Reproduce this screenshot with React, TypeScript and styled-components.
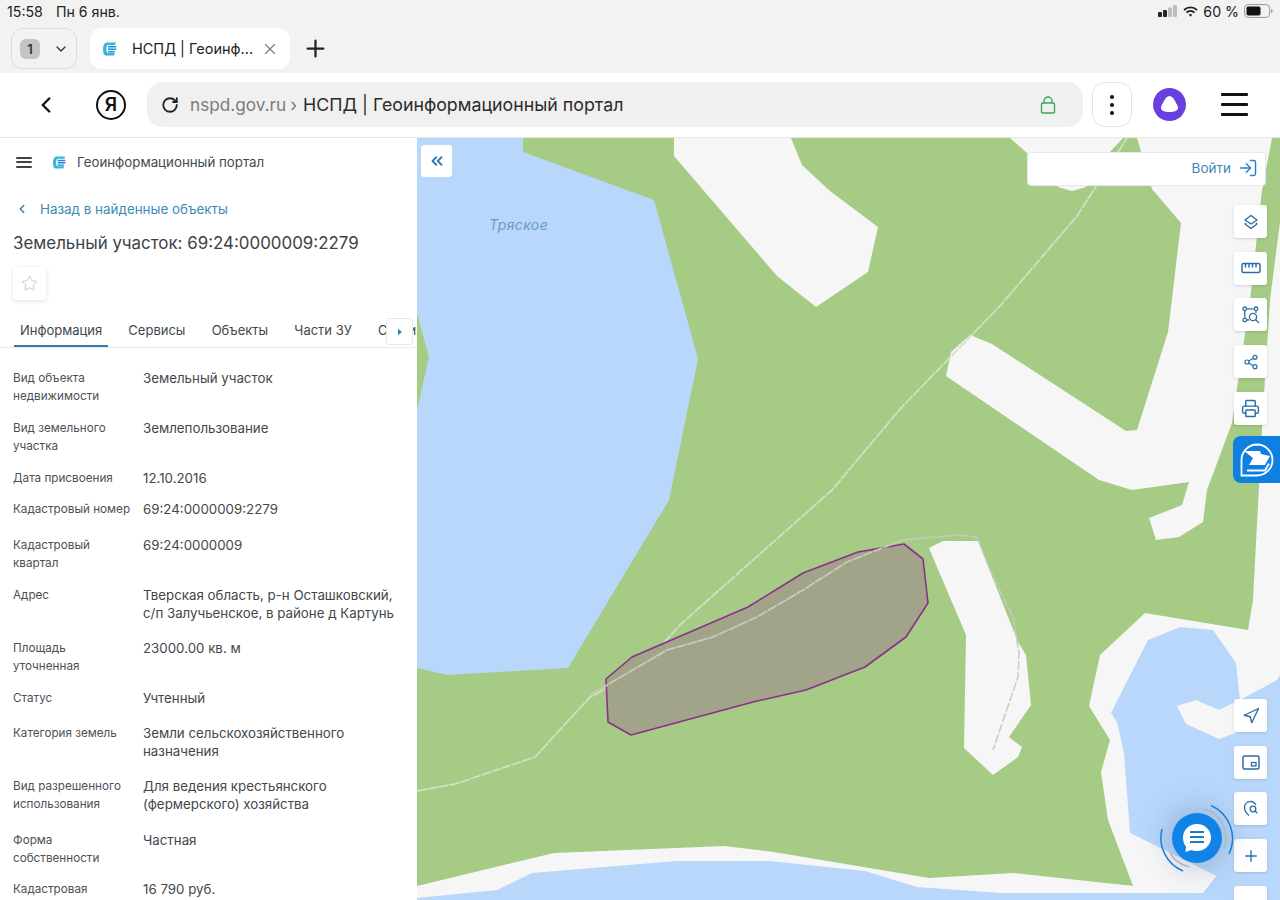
import styled, { createGlobalStyle } from 'styled-components'
import {
  ChevronDown,
  ChevronLeft,
  ChevronsLeft,
  LogIn,
  Navigation,
  Plus,
  Printer,
  RotateCw,
  Share2,
  Star,
  X,
} from 'lucide-react'

const GlobalStyle = createGlobalStyle`
  html, body {
    margin: 0;
    padding: 0;
    background: #fff;
  }
  #root {
    width: 1280px;
    height: 900px;
    overflow: hidden;
    font-family: Inter, 'Noto Sans', sans-serif;
  }
`

const Page = styled.div`
  width: 1280px;
  height: 900px;
  display: flex;
  flex-direction: column;
  overflow: hidden;
`

/* browser chrome */
const Chrome = styled.div`
  height: 73px;
  flex: none;
  background: #f2f2f2;
  display: flex;
  flex-direction: column;
`

const StatusBar = styled.div`
  height: 28px;
  flex: none;
  padding: 0 7px 6px 7px;
  box-sizing: border-box;
  display: flex;
  align-items: center;
  justify-content: space-between;
  font-size: 14.200px;
  color: #222;
`

const StatusGroup = styled.div<{ $gap: number }>`
  display: flex;
  align-items: center;
  gap: ${(p) => p.$gap}px;
`

const TabStrip = styled.div`
  display: flex;
  align-items: center;
  height: 41px;
  padding-left: 11px;
`

const TabCounter = styled.div`
  width: 66px;
  height: 41px;
  box-sizing: border-box;
  border: 1px solid #dcdcdc;
  border-radius: 12px;
  display: flex;
  align-items: center;
  gap: 13px;
  padding-left: 8px;
  margin-right: 13px;
`

const CounterBadge = styled.div`
  width: 20px;
  height: 20px;
  border-radius: 6px;
  background: #c4c4c4;
  display: flex;
  align-items: center;
  justify-content: center;
  font-size: 13px;
  font-weight: 600;
  color: #333;
`

const Tab = styled.div`
  width: 200px;
  height: 41px;
  background: #fff;
  border-radius: 12px;
  display: flex;
  align-items: center;
  padding-left: 12px;
  box-sizing: border-box;
  font-size: 14.500px;
  color: #222;
  margin-right: 12px;
`

const TabTitle = styled.span`
  margin-left: 14px;
  margin-right: 12px;
  width: 117px;
  white-space: nowrap;
`

const AddressRow = styled.div`
  height: 65px;
  flex: none;
  background: #fff;
  border-bottom: 1px solid #e6e6e6;
  box-sizing: border-box;
  display: flex;
  align-items: center;
  padding-left: 33px;
  padding-bottom: 1px;
`

const YandexCircle = styled.div`
  width: 30px;
  height: 30px;
  box-sizing: border-box;
  border: 2.5px solid #111;
  border-radius: 50%;
  margin-left: 37px;
  margin-right: 21px;
  display: flex;
  align-items: center;
  justify-content: center;
  font-size: 19px;
  font-weight: 600;
  color: #111;
`

const AddressField = styled.div`
  width: 936px;
  height: 45px;
  background: #f0f0f0;
  border-radius: 16px;
  display: flex;
  align-items: center;
  padding-left: 14px;
  padding-right: 27px;
  box-sizing: border-box;
  font-size: 17.800px;
  white-space: nowrap;
`

const Domain = styled.span`
  margin-left: 11px;
  font-size: 17.200px;
  color: #7b7b7b;
`

const Crumb = styled.span`
  color: #7b7b7b;
  margin: 0 6px 0 4px;
`

const PageTitle = styled.span`
  flex: 1;
  color: #2b2b2b;
`

const MenuDots = styled.div`
  width: 40px;
  height: 45px;
  box-sizing: border-box;
  border: 1.5px solid #e4e4e4;
  border-radius: 13px;
  margin-left: 9px;
  margin-right: 21px;
  display: flex;
  flex-direction: column;
  align-items: center;
  justify-content: center;
  gap: 4px;
`

const Dot = styled.span`
  width: 4px;
  height: 4px;
  border-radius: 50%;
  background: #111;
`

const Burger = styled.div<{ $w: number; $h: number; $gap: number; $color: string; $after: number }>`
  width: ${(p) => p.$w}px;
  margin-left: 0;
  margin-right: ${(p) => p.$after}px;
  display: flex;
  flex-direction: column;
  gap: ${(p) => p.$gap}px;
  flex: none;
  & > i {
    display: block;
    height: ${(p) => p.$h}px;
    background: ${(p) => p.$color};
    border-radius: 1px;
  }
`

const AliceSlot = styled.div`
  margin-right: 35px;
  flex: none;
  display: flex;
`

/* main area */
const Main = styled.div`
  flex: 1;
  display: flex;
  min-height: 0;
`

const Panel = styled.aside`
  width: 417px;
  flex: none;
  background: #fff;
  overflow: hidden;
  color: #3a3f44;
`

const PanelHeader = styled.div`
  height: 48px;
  display: flex;
  align-items: center;
  padding-left: 16px;
  font-size: 13.300px;
  color: #444a50;
`

const HeaderTitle = styled.span`
  margin-left: 10px;
`

const BackLink = styled.div`
  margin-top: 15px;
  padding-left: 15px;
  display: flex;
  align-items: center;
  gap: 11px;
  font-size: 13.400px;
  color: #3a8bb5;
`

const ObjectTitle = styled.h1`
  margin: 14px 0 0 13px;
  font-size: 16.900px;
  line-height: 24px;
  font-weight: 400;
  color: #3d4247;
  white-space: nowrap;
`

const FavButton = styled.div`
  width: 33px;
  height: 33px;
  margin: 12px 0 0 13px;
  border-radius: 3px;
  box-shadow: 0 1px 4px rgba(60, 70, 90, 0.16);
  display: flex;
  align-items: center;
  justify-content: center;
`

const Tabs = styled.div`
  position: relative;
  margin-top: 16px;
  height: 31px;
  border-bottom: 1px solid #e9edf0;
  display: flex;
  padding-left: 14px;
  overflow: hidden;
  font-size: 13px;
  white-space: nowrap;
`

const TabItem = styled.div<{ $active?: boolean }>`
  height: 31px;
  box-sizing: border-box;
  padding: 0 6px;
  margin-right: 14.200px;
  line-height: 28px;
  color: #41474d;
  border-bottom: 2px solid ${(p) => (p.$active ? '#2e7ea8' : 'transparent')};
`

const TabScroll = styled.div`
  position: absolute;
  left: 386px;
  top: 2px;
  width: 27px;
  height: 27px;
  box-sizing: border-box;
  background: #fff;
  border: 1px solid #e3e9ee;
  border-radius: 3px;
  display: flex;
  align-items: center;
  justify-content: center;
  &::after {
    content: '';
    border-left: 4px solid #2e7ea8;
    border-top: 3px solid transparent;
    border-bottom: 3px solid transparent;
  }
`

const Rows = styled.div`
  margin-top: 21px;
`

const Row = styled.div<{ $after: number }>`
  display: flex;
  padding: 0 13px ${(p) => p.$after}px;
  line-height: 18px;
`

const RowLabel = styled.div`
  width: 130px;
  box-sizing: border-box;
  padding-right: 8px;
  flex: none;
  font-size: 11.700px;
  color: #4b5157;
`

const RowValue = styled.div`
  font-size: 13.300px;
  color: #42474c;
`

/* map */
const MapArea = styled.div`
  position: relative;
  flex: 1;
  overflow: hidden;
  background: #a5cb85;
`

const MapCanvas = styled.svg`
  position: absolute;
  left: 0;
  top: 0;
  display: block;
`

const LakeLabel = styled.span`
  position: absolute;
  left: 72px;
  top: 78px;
  font-size: 14px;
  font-style: italic;
  letter-spacing: 0.4px;
  color: #6b98c4;
`

const Collapse = styled.div`
  position: absolute;
  left: 4px;
  top: 7px;
  width: 31px;
  height: 32px;
  background: #fff;
  border-radius: 3px;
  display: flex;
  align-items: center;
  justify-content: center;
  color: #2f7ab0;
`

const LoginBar = styled.div`
  position: absolute;
  left: 610px;
  top: 14px;
  width: 239px;
  height: 34px;
  box-sizing: border-box;
  background: #fff;
  border: 1px solid #e2eaf2;
  border-radius: 4px;
  display: flex;
  align-items: center;
  justify-content: flex-end;
  gap: 7px;
  padding-right: 7px;
  padding-bottom: 2px;
  font-size: 13.500px;
  color: #4486ba;
`

const ToolColumn = styled.div<{ $top: number }>`
  position: absolute;
  left: 817px;
  top: ${(p) => p.$top}px;
  display: flex;
  flex-direction: column;
  gap: 13.700px;
`

const ToolButton = styled.div`
  width: 33px;
  height: 33px;
  background: #fff;
  border-radius: 3px;
  box-shadow: 0 1px 3px rgba(60, 80, 110, 0.22);
  display: flex;
  align-items: center;
  justify-content: center;
  color: #2b6ea6;
`

const PortalTab = styled.div`
  position: absolute;
  left: 816px;
  top: 298px;
  width: 47px;
  height: 47px;
  background: #0f7fe0;
  border-radius: 8px 0 0 8px;
  display: flex;
  align-items: center;
  padding-left: 7px;
  box-sizing: border-box;
`

const ChatBubble = styled.div`
  position: absolute;
  left: 755px;
  top: 675px;
  width: 50px;
  height: 50px;
  border-radius: 50%;
  background: #1283e6;
  box-shadow: 0 0 26px 8px rgba(60, 90, 130, 0.22);
  display: flex;
  align-items: center;
  justify-content: center;
`

const ChatRings = styled.svg`
  position: absolute;
  left: 741px;
  top: 661px;
`

const GREEN = '#a5cb85'
const BLUE = '#b9d7fa'
const WHITE = '#f6f6f7'

const whites = [
  '674,138 674,156 777,276 816,307 868,272 878,227 830,191 802,165 791,138',
  '1010,138 1035,160 1058,187 1072,191 1086,187 1110,152 1123,138',
  '1137,138 1152,189 1181,223 1168,332 1137,430 1126,431 992,344 970,335 951,352 946,376 1099,480 1132,490 1189,482 1182,505 1149,518 1156,540 1179,537 1203,522 1207,490 1232,423 1250,300 1262,190 1272,138',
  '1280,222 1270,300 1263,410 1253,600 1248,630 1145,613 1100,655 1089,706 1110,740 1101,772 1108,820 1133,886 1013,873 929,878 774,852 724,846 554,853 417,886 417,900 1280,900',
  '929,548 943,541 978,541 1018,642 1026,655 1031,705 1009,737 1022,747 1018,757 993,775 964,748 966,635 937,567',
]

const blues = [
  '417,138 523,138 523,152 654,200 698,359 669,500 568,668 447,675 417,668',
  '1180,627 1213,630 1236,663 1240,700 1277,680 1280,675 1280,900 1203,893 1216,876 1130,833 1124,753 1117,722 1111,713 1148,640',
  '417,898 497,890 532,873 677,861 770,861 865,871 917,887 1000,893 1280,893 1280,900 417,900',
]

const parcel =
  '606,679 632,657 748,607 803,573 858,552 904,544 923,559 928,603 906,637 865,667 806,690 753,702 631,735 608,722'

const trailA =
  '417,791 455,784 535,757 590,697 637,672 681,624 832,490 901,408 1000,306 1077,216 1127,138'
const trailB =
  '590,695 667,650 713,637 757,617 803,590 847,562 890,545 903,540 957,535 977,537'
const trailC = '977,537 993,577 1013,617 1019,653 1018,677 993,750'

const details: { label: string; value: string; after: number }[] = [
  { label: 'Вид объекта недвижимости', value: 'Земельный участок', after: 14 },
  { label: 'Вид земельного участка', value: 'Землепользование', after: 14 },
  { label: 'Дата присвоения', value: '12.10.2016', after: 13 },
  { label: 'Кадастровый номер', value: '69:24:0000009:2279', after: 18 },
  { label: 'Кадастровый квартал', value: '69:24:0000009', after: 14 },
  { label: 'Адрес', value: 'Тверская область, р-н Осташковский, с/п Залучьенское, в районе д Картунь', after: 17 },
  { label: 'Площадь уточненная', value: '23000.00 кв. м', after: 14 },
  { label: 'Статус', value: 'Учтенный', after: 17 },
  { label: 'Категория земель', value: 'Земли сельскохозяйственного назначения', after: 17 },
  { label: 'Вид разрешенного использования', value: 'Для ведения крестьянского (фермерского) хозяйства', after: 18 },
  { label: 'Форма собственности', value: 'Частная', after: 13 },
  { label: 'Кадастровая', value: '16 790 руб.', after: 0 },
]

function PortalLogo({ size }: { size: number }) {
  return (
    <svg width={size} height={size} viewBox="0 0 16 16" fill="none">
      <path d="M5 1.500h9l-1 2.500H6.500C5 4 4.500 5 4.400 8c0 3 .5 4 2 4H13l-1 2.500H4C2 14.500 1 12 1 8c0-4 2-6.500 4-6.500z" fill="#35b6d8" />
      <path d="M6 5h8.500l-.6 1.600H6zM6 7.500h8.500l-.6 1.600H6zM6 10h7l-.6 1.400H6z" fill="#1c86d8" />
    </svg>
  )
}

function SignalIcon() {
  return (
    <svg width="20" height="12" viewBox="0 0 20 12">
      <rect x="0" y="7" width="4" height="5" rx="1" fill="#222" />
      <rect x="5" y="5" width="4" height="7" rx="1" fill="#222" />
      <rect x="10" y="2.500" width="4" height="9.500" rx="1" fill="#bdbdbd" />
      <rect x="15" y="0" width="4" height="12" rx="1" fill="#bdbdbd" />
    </svg>
  )
}

function WifiIcon() {
  return (
    <svg width="15" height="11" viewBox="0 0 15 11" fill="none" stroke="#222" strokeWidth="1.800">
      <path d="M1 4a9.500 9.500 0 0 1 13 0" />
      <path d="M3.500 6.500a6 6 0 0 1 8 0" />
      <path d="M7.500 10.800 5.800 8.800a2.600 2.600 0 0 1 3.400 0z" fill="#222" stroke="none" />
    </svg>
  )
}

function BatteryIcon() {
  return (
    <svg width="29" height="14" viewBox="0 0 29 14">
      <rect x="0.600" y="0.600" width="25" height="12.800" rx="3.500" fill="none" stroke="#999" />
      <rect x="2.500" y="2.500" width="14" height="9" rx="1.800" fill="#111" />
      <path d="M27 5v4c1-.3 1.600-1 1.600-2s-.6-1.700-1.600-2z" fill="#999" />
    </svg>
  )
}

function LockIcon() {
  return (
    <svg width="16" height="18" viewBox="0 0 16 18" fill="none" stroke="#3aa651" strokeWidth="1.300">
      <rect x="1.500" y="7" width="13" height="10" rx="1" />
      <path d="M4 7V5a4 4 0 0 1 8 0v2" />
    </svg>
  )
}

function AliceIcon() {
  return (
    <svg width="33" height="33" viewBox="0 0 33 33">
      <circle cx="16.500" cy="16.500" r="16.500" fill="#6a3fe0" />
      <path d="M16.500 8c2.500 0 4 2.200 5.800 5.400 1.500 2.700 2.700 4.700 2.700 6.400 0 3-3.600 4.200-8.500 4.200S8 22.800 8 19.800c0-1.700 1.200-3.700 2.700-6.400C12.500 10.200 14 8 16.500 8z" fill="#fff" />
    </svg>
  )
}

function LayersIcon() {
  return (
    <svg width="16" height="16" viewBox="0 0 16 16" fill="none" stroke="currentColor" strokeWidth="1.400" strokeLinejoin="round">
      <path d="M8 1.500 14 6 8 10 2 6z" />
      <path d="M3 9 2 10l6 4.500L14 10l-1-1" />
    </svg>
  )
}

function RulerIcon() {
  return (
    <svg width="20" height="12" viewBox="0 0 20 12" fill="none" stroke="currentColor" strokeWidth="1.500">
      <rect x="1" y="1.500" width="18" height="9" rx="1.500" />
      <path d="M4.500 2v3.500M8 2v3.500M11.500 2v3.500M15 2v3.500" />
    </svg>
  )
}

function AreaSearchIcon() {
  return (
    <svg width="18" height="18" viewBox="0 0 18 18" fill="none" stroke="currentColor" strokeWidth="1.300">
      <circle cx="2.800" cy="2.800" r="1.800" />
      <circle cx="14" cy="2.800" r="1.800" />
      <circle cx="2.800" cy="14" r="1.800" />
      <path d="M5 2.800h6.500M2.800 5v6.500M5 14h2" />
      <circle cx="11" cy="11" r="3.600" />
      <path d="m13.700 13.700 3.300 3.300M14 5v2" />
    </svg>
  )
}

function MiniMapIcon() {
  return (
    <svg width="18" height="15" viewBox="0 0 18 15" fill="none" stroke="currentColor" strokeWidth="1.500">
      <rect x="1" y="1" width="16" height="13" rx="1.500" />
      <rect x="9.500" y="7.500" width="4.500" height="3.500" strokeWidth="1.300" />
    </svg>
  )
}

function SpotSearchIcon() {
  return (
    <svg width="16" height="17" viewBox="0 0 16 17" fill="none" stroke="currentColor" strokeWidth="1.300">
      <path d="M7.500 1.500C4 1.500 1.500 4 1.500 7.500c0 3 2 5.800 4.500 8" />
      <path d="M13 5c-1-2-3-3.500-5.500-3.500" />
      <circle cx="10" cy="9" r="2.800" />
      <path d="m12 11 2.300 2.300" />
    </svg>
  )
}

function PortalMark() {
  return (
    <svg width="34" height="34" viewBox="0 0 34 34" fill="none">
      <path d="M17 1.500a15.500 15.500 0 0 1 0 31H1.500V17A15.500 15.500 0 0 1 17 1.500z" stroke="#fff" strokeWidth="1.800" />
      <path d="M4 8h16l1 3 9 2-5 9H9l4-7z" fill="#fff" />
      <path d="M7 27.500h18l4-7" stroke="#fff" strokeWidth="1.800" />
    </svg>
  )
}

function ChatIcon() {
  return (
    <svg width="30" height="30" viewBox="0 0 30 30">
      <path d="M15 1c8 0 14 6 14 13.500S23 28 15 28c-2 0-4-.4-5.500-1L3.500 29 4 23.500C2 21.300 1 18 1 14.500 1 7 7 1 15 1z" fill="#fff" />
      <path d="M8 9h14M8 14h14M8 19h14" stroke="#1b7cc8" strokeWidth="2.200" />
    </svg>
  )
}

function MapShapes() {
  return (
    <MapCanvas width="863" height="762" viewBox="417 138 863 762">
      {whites.map((points) => (
        <polygon key={points} points={points} fill={WHITE} />
      ))}
      {blues.map((points) => (
        <polygon key={points} points={points} fill={BLUE} />
      ))}
      <polygon points="1130,833 1216,876 1203,893 1000,893 1000,874 1133,886" fill={WHITE} />
      <polygon points="1177,706 1196,700 1219,710 1233,703 1265,700 1265,722 1219,739 1186,724" fill={WHITE} />
      <polygon points="417,313 429,357 417,410" fill={GREEN} />
      <polyline points={trailA} fill="none" stroke="#d3dfc8" strokeWidth="1.800" strokeDasharray="10 1" />
      <polygon points={parcel} fill="#a2a48a" stroke="#8b2f8c" strokeWidth="1.600" strokeLinejoin="round" />
      <polyline points={trailB} fill="none" stroke="#c6cbbd" strokeWidth="1.800" strokeDasharray="10 1" />
      <polyline points={trailC} fill="none" stroke="#c9cbc8" strokeWidth="1.500" strokeDasharray="9 2" />
      <polyline points="951,352 970,335" fill="none" stroke="#d3d3d3" strokeWidth="1.400" strokeDasharray="2 2" />
    </MapCanvas>
  )
}

function App() {
  return (
    <>
      <GlobalStyle />
      <Page>
        <Chrome>
          <StatusBar>
            <StatusGroup $gap={13}>
              <span>15:58</span>
              <span>Пн 6 янв.</span>
            </StatusGroup>
            <StatusGroup $gap={5}>
              <SignalIcon />
              <WifiIcon />
              <span>60 %</span>
              <BatteryIcon />
            </StatusGroup>
          </StatusBar>
          <TabStrip>
            <TabCounter>
              <CounterBadge>1</CounterBadge>
              <ChevronDown size={16} color="#333" strokeWidth={2} />
            </TabCounter>
            <Tab>
              <PortalLogo size={16} />
              <TabTitle>НСПД | Геоинф...</TabTitle>
              <X size={18} color="#777" strokeWidth={1.500} />
            </Tab>
            <Plus size={27} color="#222" strokeWidth={2} />
          </TabStrip>
        </Chrome>

        <AddressRow>
          <ChevronLeft size={26} color="#111" strokeWidth={2.200} />
          <YandexCircle>Я</YandexCircle>
          <AddressField>
            <RotateCw size={18} color="#222" strokeWidth={2.400} />
            <Domain>nspd.gov.ru</Domain>
            <Crumb>›</Crumb>
            <PageTitle>НСПД | Геоинформационный портал</PageTitle>
            <LockIcon />
          </AddressField>
          <MenuDots>
            <Dot />
            <Dot />
            <Dot />
          </MenuDots>
          <AliceSlot>
            <AliceIcon />
          </AliceSlot>
          <Burger $w={27} $h={3} $gap={7} $color="#111" $after={0}>
            <i />
            <i />
            <i />
          </Burger>
        </AddressRow>

        <Main>
          <Panel>
            <PanelHeader>
              <Burger $w={16} $h={2} $gap={2.500} $color="#3d4247" $after={20}>
                <i />
                <i />
                <i />
              </Burger>
              <PortalLogo size={15} />
              <HeaderTitle>Геоинформационный портал</HeaderTitle>
            </PanelHeader>
            <BackLink>
              <ChevronLeft size={14} strokeWidth={2.400} color="#2e7ea8" />
              <span>Назад в найденные объекты</span>
            </BackLink>
            <ObjectTitle>Земельный участок: 69:24:0000009:2279</ObjectTitle>
            <FavButton>
              <Star size={17} color="#bfc4c9" strokeWidth={1.300} />
            </FavButton>
            <Tabs>
              <TabItem $active>Информация</TabItem>
              <TabItem>Сервисы</TabItem>
              <TabItem>Объекты</TabItem>
              <TabItem>Части ЗУ</TabItem>
              <TabItem>Связи</TabItem>
              <TabScroll />
            </Tabs>
            <Rows>
              {details.map((row) => (
                <Row key={row.label} $after={row.after}>
                  <RowLabel>{row.label}</RowLabel>
                  <RowValue>{row.value}</RowValue>
                </Row>
              ))}
            </Rows>
          </Panel>

          <MapArea>
            <MapShapes />
            <LakeLabel>Тряское</LakeLabel>
            <Collapse>
              <ChevronsLeft size={18} strokeWidth={2.400} />
            </Collapse>
            <LoginBar>
              <span>Войти</span>
              <LogIn size={20} color="#2a82d6" strokeWidth={1.800} />
            </LoginBar>
            <ToolColumn $top={67}>
              <ToolButton>
                <LayersIcon />
              </ToolButton>
              <ToolButton>
                <RulerIcon />
              </ToolButton>
              <ToolButton>
                <AreaSearchIcon />
              </ToolButton>
              <ToolButton>
                <Share2 size={16} strokeWidth={1.800} />
              </ToolButton>
              <ToolButton>
                <Printer size={19} strokeWidth={1.800} />
              </ToolButton>
            </ToolColumn>
            <PortalTab>
              <PortalMark />
            </PortalTab>
            <ToolColumn $top={561}>
              <ToolButton>
                <Navigation size={18} strokeWidth={1.800} />
              </ToolButton>
              <ToolButton>
                <MiniMapIcon />
              </ToolButton>
              <ToolButton>
                <SpotSearchIcon />
              </ToolButton>
              <ToolButton>
                <Plus size={18} strokeWidth={1.800} />
              </ToolButton>
              <ToolButton />
            </ToolColumn>
            <ChatBubble>
              <ChatIcon />
            </ChatBubble>
            <ChatRings width="78" height="78" viewBox="0 0 78 78" fill="none">
              <path d="M53 6.500A36 36 0 0 1 71 55" stroke="#1a80d8" strokeWidth="1.500" />
              <path d="M4 30A36 36 0 0 0 25 72" stroke="#1a80d8" strokeWidth="1.500" />
              <path d="M46 10A30 30 0 0 1 66 50" stroke="#aeb9c6" strokeWidth="1.500" />
              <path d="M12 54A30 30 0 0 0 32 68" stroke="#aeb9c6" strokeWidth="1.500" />
            </ChatRings>
          </MapArea>
        </Main>
      </Page>
    </>
  )
}

export default App
